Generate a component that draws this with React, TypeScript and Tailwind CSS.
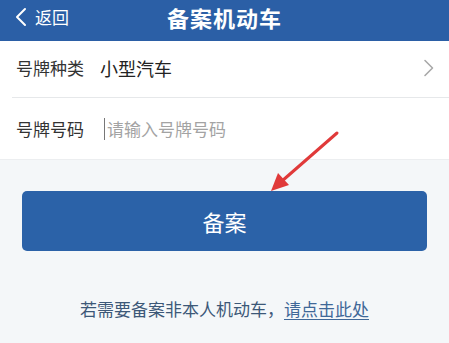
import React from "react";

const FONT = { fontFamily: '"Noto Sans CJK SC", "Noto Sans", sans-serif' };

export default function App() {
  return (
    <div className="relative min-h-[343px] w-full bg-[#f4f7f9]" style={FONT}>
      {/* Header */}
      <div className="grid h-[41px] grid-cols-[1fr_auto_1fr] items-center bg-[#2b5fa6] pb-[8px] text-white">
        <div className="flex items-center pl-[14px]">
          <svg width="14" height="20" viewBox="0 0 14 20" className="mr-[7px]">
            <path d="M11 2 L3 10 L11 18" fill="none" stroke="#fff" strokeWidth="2" strokeLinecap="round" strokeLinejoin="round" />
          </svg>
          <span className="text-[17px] leading-none">返回</span>
        </div>
        <h1 className="text-[22px] font-bold leading-none tracking-[1px]">备案机动车</h1>
        <div />
      </div>

      {/* Form */}
      <div className="bg-white">
        <div className="ml-[12px] flex h-[57px] items-center border-b border-[#e6e8ea] pb-[2px] pr-[14px]">
          <span className="w-[88px] pl-[4px] text-[17px] text-[#333]">号牌种类</span>
          <span className="flex-1 text-[18px] text-[#222]">小型汽车</span>
          <svg width="12" height="18" viewBox="0 0 12 18">
            <path d="M2 1.5 L9.5 9 L2 16.5" fill="none" stroke="#a9a9a9" strokeWidth="1.6" strokeLinecap="round" strokeLinejoin="round" />
          </svg>
        </div>
        <div className="flex h-[62px] items-center border-b border-[#eceef0] pl-[16px]">
          <span className="w-[88px] text-[17px] text-[#333]">号牌号码</span>
          <span className="mr-[2px] h-[22px] w-px bg-[#777]" />
          <span className="text-[17px] text-[#a3a3a3]">请输入号牌号码</span>
        </div>
      </div>

      {/* Submit */}
      <div className="px-[22px] pt-[31px]">
        <button className="flex h-[60px] w-full items-center justify-center rounded-[5px] bg-[#2b62a8] text-[22px] text-white">
          备案
        </button>
      </div>

      <p className="mt-[46px] text-center text-[17px] leading-[24px] text-[#3c5878]">
        若需要备案非本人机动车，
        <span className="text-[#3f6898] underline underline-offset-[3px]">请点击此处</span>
      </p>

      {/* Red annotation arrow */}
      <svg className="pointer-events-none absolute left-0 top-0" width="449" height="343" viewBox="0 0 449 343">
        <line x1="337" y1="133" x2="282" y2="181" stroke="#e03a3a" strokeWidth="3" strokeLinecap="round" />
        <polygon points="271,191 278,173 289,185" fill="#e03a3a" />
      </svg>
    </div>
  );
}
